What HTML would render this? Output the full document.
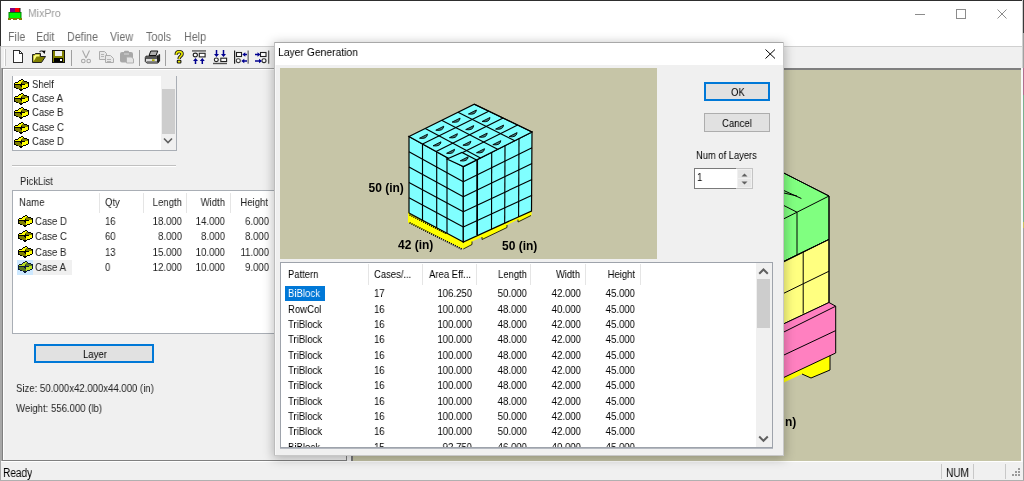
<!DOCTYPE html>
<html><head><meta charset="utf-8"><style>
html,body{margin:0;padding:0;width:1024px;height:481px;overflow:hidden;background:#f0f0f0}
body>div,body>svg,body div{position:absolute}
body>svg{position:absolute}
.t{font-family:"Liberation Sans", sans-serif;line-height:1;white-space:pre;will-change:transform}
svg{position:absolute}
</style></head><body>
<div style="left:0px;top:0px;width:1024px;height:481px;background:#f0f0f0;"></div>
<div style="left:0px;top:0px;width:1024px;height:46px;background:#ffffff;"></div>
<div style="left:0px;top:0px;width:1024px;height:1px;background:#2e2e2e;"></div>
<div style="left:0px;top:0px;width:1px;height:46px;background:#2e2e2e;"></div>
<div style="left:0px;top:46px;width:1px;height:435px;background:#a8a8a8;"></div>
<div style="left:1022px;top:0px;width:1px;height:68px;background:#d0d0d0;"></div>
<div style="left:1023px;top:0px;width:1px;height:33px;background:#3a3a3a;"></div>
<div style="left:1023px;top:33px;width:1px;height:35px;background:#a0a0a0;"></div>
<div style="left:1023px;top:68px;width:1px;height:27px;background:#b07090;"></div>
<div style="left:1023px;top:95px;width:1px;height:127px;background:#78b090;"></div>
<div style="left:1023px;top:222px;width:1px;height:6px;background:#c8c060;"></div>
<div style="left:1023px;top:228px;width:1px;height:253px;background:#a0a0a0;"></div>
<svg style="left:8px;top:7px" width="16" height="15" viewBox="0 0 16 15">
<rect x="2" y="1" width="6" height="5" fill="#800080"/><rect x="7" y="1" width="5" height="5" fill="#ff0000"/>
<rect x="11.5" y="1" width="1" height="5" fill="#202020"/>
<rect x="1" y="5.5" width="12" height="6" fill="#00ff00" stroke="#008000" stroke-width="1"/>
<rect x="0" y="11" width="14" height="2" fill="#808000"/><rect x="3" y="12" width="2" height="1" fill="#fff"/><rect x="9" y="12" width="2" height="1" fill="#fff"/>
</svg>
<div class="t" style="left:27.5px;top:8px;font-size:11.5px;color:#9a9a9a;transform:scaleX(0.91);transform-origin:0 0;">MixPro</div>
<div style="left:915px;top:14px;width:10px;height:1px;background:#8c8c8c;"></div>
<div style="left:956px;top:9px;width:8px;height:8px;border:1px solid #8c8c8c"></div>
<svg style="left:997px;top:9px" width="11" height="10" viewBox="0 0 11 10"><path d="M0.5 0.5L9.5 9.5M9.5 0.5L0.5 9.5" stroke="#8c8c8c" stroke-width="1"/></svg>
<div class="t" style="left:7.5px;top:31px;font-size:12px;color:#6d6d6d;transform:scaleX(0.895);transform-origin:0 0;">File</div>
<div class="t" style="left:36px;top:31px;font-size:12px;color:#6d6d6d;transform:scaleX(0.895);transform-origin:0 0;">Edit</div>
<div class="t" style="left:67px;top:31px;font-size:12px;color:#6d6d6d;transform:scaleX(0.895);transform-origin:0 0;">Define</div>
<div class="t" style="left:110px;top:31px;font-size:12px;color:#6d6d6d;transform:scaleX(0.895);transform-origin:0 0;">View</div>
<div class="t" style="left:146px;top:31px;font-size:12px;color:#6d6d6d;transform:scaleX(0.895);transform-origin:0 0;">Tools</div>
<div class="t" style="left:184px;top:31px;font-size:12px;color:#6d6d6d;transform:scaleX(0.895);transform-origin:0 0;">Help</div>
<div style="left:1px;top:46px;width:1021px;height:1px;background:#d0d0d0;"></div>
<div style="left:1px;top:47px;width:1021px;height:21px;background:#f0f0f0;"></div>
<div style="left:1px;top:68px;width:1021px;height:1px;background:#a0a0a0;"></div>
<div style="left:4px;top:49px;width:1px;height:17px;background:#ffffff;"></div>
<div style="left:5px;top:49px;width:1px;height:17px;background:#c8c8c8;"></div>
<svg style="left:0;top:0" width="274" height="70" viewBox="0 0 274 70">
<g shape-rendering="crispEdges">
<path d="M13.5 50.5H19.5L22.5 53.5V62.5H13.5Z" fill="#fff" stroke="#303030" stroke-width="1"/>
<path d="M19.5 50.5V53.5H22.5" fill="none" stroke="#303030"/>
<rect x="52.5" y="50.5" width="12" height="12" fill="#808000" stroke="#101010"/>
<rect x="55" y="51" width="7" height="5" fill="#f0f0f0"/>
<rect x="54" y="58" width="9" height="4" fill="#000"/>
<rect x="60" y="59" width="2" height="2" fill="#fff"/>
<rect x="71" y="50" width="1" height="16" fill="#a0a0a0"/>
<rect x="139" y="50" width="1" height="16" fill="#a0a0a0"/>
<rect x="165" y="50" width="1" height="16" fill="#a0a0a0"/>
</g>
<!-- open -->
<path d="M32.5 54.5H34.5L35.5 53.5H40.5V56.5H45.5L41.5 62.5H32.5Z" fill="#808000" stroke="#202020"/>
<path d="M33.5 55.5H34.5L35.5 54.5H39.5V56.5H36.5L33.5 61.5Z" fill="#ffff80"/>
<path d="M39.5 52Q41.5 49.8 43.5 51.5" fill="none" stroke="#505050" stroke-width="1.2"/>
<path d="M42 51L45.5 50.5L44.5 54Z" fill="#000"/>
<!-- cut (disabled) -->
<path d="M82.5 50.5L86 58M89.5 50.5L86 58" stroke="#a8a8a8" fill="none" stroke-width="1.1"/>
<circle cx="83.3" cy="61" r="1.8" fill="none" stroke="#a8a8a8" stroke-width="1.1"/>
<circle cx="88.7" cy="61" r="1.8" fill="none" stroke="#a8a8a8" stroke-width="1.1"/>
<!-- copy (disabled) -->
<path d="M99.5 51.5H104.5L106.5 53.5V59.5H99.5Z" fill="#e8e8e8" stroke="#acacac"/>
<path d="M105.5 55.5H110.5L113.5 58.5V62.5H105.5Z" fill="#e8e8e8" stroke="#acacac"/>
<path d="M101 54.5H104M101 56.5H104M107 59.5H111M107 61.5H111" stroke="#b4b4b4"/>
<!-- paste (disabled) -->
<rect x="120" y="52" width="13" height="10.5" rx="2" fill="#a8a8a8"/>
<rect x="124" y="50.8" width="5" height="2" rx="1" fill="#a8a8a8"/>
<rect x="124" y="53.5" width="5" height="1" fill="#d8d8d8"/>
<path d="M126.5 57H131.5L133.5 59V63H126.5Z" fill="#e4e4e4" stroke="#b0b0b0"/>
<!-- print -->
<path d="M149 55.5L150.8 51H157.8L156 55.5Z" fill="#b0b0b0" stroke="#101010"/>
<path d="M146 56.2H157L159.6 54.5V61.2L157.5 63H146.8L145.3 61.5V57.5Z" fill="#dcdcdc" stroke="#101010"/>
<rect x="146" y="57.3" width="11.5" height="1.4" fill="#202020"/>
<rect x="146.5" y="61.2" width="11" height="1.5" fill="#707070"/>
<path d="M158 56V62.5" stroke="#101010" stroke-width="1.8"/>
<rect x="152" y="59.3" width="2.6" height="1.8" fill="#b0b000"/>
<!-- help ? -->
<path d="M176.2 54.8C176.2 52.3 177.4 51.6 179.1 51.6C181 51.6 182.1 52.6 182.1 54.1C182.1 55.6 180.9 56.1 180 56.8C179.3 57.3 179.1 58 179.1 59" fill="none" stroke="#101010" stroke-width="3.4"/>
<path d="M176.2 54.8C176.2 52.3 177.4 51.6 179.1 51.6C181 51.6 182.1 52.6 182.1 54.1C182.1 55.6 180.9 56.1 180 56.8C179.3 57.3 179.1 58 179.1 59" fill="none" stroke="#e8e800" stroke-width="1.6"/>
<rect x="177.3" y="60.2" width="3.6" height="2.8" rx="0.8" fill="#e8e800" stroke="#101010" stroke-width="1.1"/>
<!-- icon 2: top align -->
<rect x="192" y="50" width="14" height="1.8" fill="#7a7a7a"/>
<ellipse cx="195.3" cy="55" rx="2.1" ry="1.9" fill="#fff" stroke="#202020" stroke-width="1.1"/>
<rect x="199.3" y="53.3" width="5.8" height="3.6" fill="#fff" stroke="#202020" stroke-width="1.1"/>
<path d="M195.5 64V60M202.3 64V60" stroke="#000090" stroke-width="1.5"/>
<path d="M193 61L195.5 58L198 61ZM199.8 61L202.3 58L204.8 61Z" fill="#000090"/>
<!-- icon 3: bottom align -->
<path d="M216.5 50V54.5M223.5 50V54.5" stroke="#000090" stroke-width="1.5"/>
<path d="M214 54L216.5 57L219 54ZM221 54L223.5 57L226 54Z" fill="#000090"/>
<ellipse cx="216.3" cy="59.8" rx="2" ry="1.8" fill="#fff" stroke="#202020" stroke-width="1.1"/>
<rect x="220.8" y="58.2" width="5.8" height="3.3" fill="#fff" stroke="#202020" stroke-width="1.1"/>
<rect x="213" y="62.8" width="14" height="1.4" fill="#505050"/>
<!-- icon 4 -->
<rect x="234" y="50.5" width="1.2" height="13.2" fill="#202020"/>
<rect x="247.5" y="50.5" width="1.3" height="13.2" fill="#6a6a6a"/>
<rect x="236.5" y="52.5" width="5" height="4" fill="#fff" stroke="#202020" stroke-width="1.1"/>
<ellipse cx="238.3" cy="60.7" rx="2" ry="1.9" fill="#fff" stroke="#404040" stroke-width="1.1"/>
<path d="M244 54.5H247M243.5 61H247" stroke="#000090" stroke-width="1.4"/>
<path d="M245.3 52.3L242.3 54.5L245.3 56.7ZM244.3 58.8L241.3 61L244.3 63.2Z" fill="#000090"/>
<!-- icon 5 -->
<rect x="268" y="50.5" width="1.3" height="13.2" fill="#5a5a5a"/>
<rect x="260.5" y="52.5" width="5.5" height="4" fill="#fff" stroke="#202020" stroke-width="1.1"/>
<ellipse cx="264" cy="60.7" rx="2" ry="1.9" fill="#fff" stroke="#303030" stroke-width="1.1"/>
<path d="M255 54.5H258M255 61H259.5" stroke="#000090" stroke-width="1.4"/>
<path d="M257.5 52.3L260.5 54.5L257.5 56.7ZM259 58.8L262 61L259 63.2Z" fill="#000090"/>
</svg>
<div style="left:1px;top:69px;width:346px;height:392px;background:#f0f0f0;"></div>
<div style="left:1px;top:68px;width:1px;height:413px;background:#a8a8a8;"></div>
<div style="left:2px;top:68px;width:1px;height:393px;background:#808080;"></div>
<div style="left:3px;top:69px;width:344px;height:1px;background:#ffffff;"></div>
<div style="left:3px;top:69px;width:1px;height:391px;background:#ffffff;"></div>
<div style="left:2px;top:460px;width:345px;height:1px;background:#808080;"></div>
<div style="left:346px;top:69px;width:1px;height:392px;background:#808080;"></div>
<div style="left:347px;top:69px;width:5px;height:392px;background:#f0f0f0;"></div>
<div style="left:351px;top:68px;width:2px;height:393px;background:#7a7a7a;"></div>
<div style="left:353px;top:70px;width:668px;height:391px;background:#c6c5a7;"></div>
<div style="left:351px;top:68px;width:671px;height:2px;background:#7f7f7f;"></div>
<div style="left:1021px;top:68px;width:2px;height:394px;background:#f8f8f8;"></div>
<div style="left:1px;top:461px;width:1021px;height:1px;background:#ffffff;"></div>
<div style="left:1px;top:462px;width:1021px;height:18px;background:#f0f0f0;"></div>
<div style="left:0px;top:480px;width:1024px;height:1px;background:#b0b0b0;"></div>
<div class="t" style="left:3px;top:467px;font-size:12px;color:#000;transform:scaleX(0.84);transform-origin:0 0;">Ready</div>
<div style="left:941px;top:464px;width:1px;height:15px;background:#c8c8c8;"></div>
<div style="left:973px;top:464px;width:1px;height:15px;background:#c8c8c8;"></div>
<div style="left:1005px;top:464px;width:1px;height:15px;background:#c8c8c8;"></div>
<div class="t" style="left:946px;top:467px;font-size:12px;color:#000;transform:scaleX(0.84);transform-origin:0 0;">NUM</div>
<svg style="left:1010px;top:468px" width="11" height="11" viewBox="0 0 11 11"><g fill="#9a9a9a"><rect x="8" y="0" width="2" height="2"/><rect x="5" y="3" width="2" height="2"/><rect x="8" y="3" width="2" height="2"/><rect x="2" y="6" width="2" height="2"/><rect x="5" y="6" width="2" height="2"/><rect x="8" y="6" width="2" height="2"/></g></svg>
<div style="left:12px;top:76px;width:165px;height:75px;background:#a9aeb5;"></div>
<div style="left:13px;top:76px;width:163px;height:74px;background:#ffffff;"></div>
<div style="left:161px;top:76px;width:15px;height:74px;background:#f0f0f0;"></div>
<div style="left:162px;top:89px;width:13px;height:45px;background:#cdcdcd;"></div>
<svg style="left:162px;top:136px" width="12" height="10" viewBox="0 0 12 10"><path d="M2 2.5L6 6.5L10 2.5" fill="none" stroke="#606060" stroke-width="1.6"/></svg>
<svg style="left:13px;top:79px" width="17" height="12" viewBox="0 0 17 12" shape-rendering="crispEdges"><rect x="8" y="0" width="2" height="1" fill="#000"/><rect x="6" y="1" width="2" height="1" fill="#000"/><rect x="8" y="1" width="2" height="1" fill="#ffff00"/><rect x="10" y="1" width="1" height="1" fill="#000"/><rect x="5" y="2" width="1" height="1" fill="#000"/><rect x="6" y="2" width="3" height="1" fill="#ffff00"/><rect x="9" y="2" width="2" height="1" fill="#808000"/><rect x="11" y="2" width="3" height="1" fill="#000"/><rect x="2" y="3" width="3" height="1" fill="#000"/><rect x="5" y="3" width="3" height="1" fill="#ffff00"/><rect x="8" y="3" width="6" height="1" fill="#808000"/><rect x="14" y="3" width="2" height="1" fill="#000"/><rect x="1" y="4" width="1" height="1" fill="#000"/><rect x="2" y="4" width="6" height="1" fill="#ffff00"/><rect x="8" y="4" width="1" height="1" fill="#000"/><rect x="9" y="4" width="6" height="1" fill="#808000"/><rect x="15" y="4" width="1" height="1" fill="#000"/><rect x="1" y="5" width="11" height="1" fill="#000"/><rect x="12" y="5" width="3" height="1" fill="#ffff00"/><rect x="15" y="5" width="1" height="1" fill="#000"/><rect x="1" y="6" width="1" height="1" fill="#000"/><rect x="2" y="6" width="5" height="1" fill="#808000"/><rect x="7" y="6" width="2" height="1" fill="#000"/><rect x="9" y="6" width="6" height="1" fill="#ffff00"/><rect x="15" y="6" width="1" height="1" fill="#000"/><rect x="1" y="7" width="1" height="1" fill="#000"/><rect x="2" y="7" width="6" height="1" fill="#808000"/><rect x="8" y="7" width="1" height="1" fill="#000"/><rect x="9" y="7" width="6" height="1" fill="#ffff00"/><rect x="15" y="7" width="1" height="1" fill="#000"/><rect x="1" y="8" width="2" height="1" fill="#000"/><rect x="3" y="8" width="6" height="1" fill="#808000"/><rect x="9" y="8" width="4" height="1" fill="#ffff00"/><rect x="13" y="8" width="2" height="1" fill="#000"/><rect x="3" y="9" width="2" height="1" fill="#000"/><rect x="5" y="9" width="4" height="1" fill="#808000"/><rect x="9" y="9" width="1" height="1" fill="#ffff00"/><rect x="10" y="9" width="3" height="1" fill="#000"/><rect x="6" y="10" width="4" height="1" fill="#000"/><rect x="7" y="11" width="2" height="1" fill="#000"/></svg>
<div class="t" style="left:32px;top:79px;font-size:11px;color:#222;transform:scaleX(0.87);transform-origin:0 0;">Shelf</div>
<svg style="left:13px;top:93px" width="17" height="12" viewBox="0 0 17 12" shape-rendering="crispEdges"><rect x="8" y="0" width="2" height="1" fill="#000"/><rect x="6" y="1" width="2" height="1" fill="#000"/><rect x="8" y="1" width="2" height="1" fill="#ffff00"/><rect x="10" y="1" width="1" height="1" fill="#000"/><rect x="5" y="2" width="1" height="1" fill="#000"/><rect x="6" y="2" width="3" height="1" fill="#ffff00"/><rect x="9" y="2" width="2" height="1" fill="#808000"/><rect x="11" y="2" width="3" height="1" fill="#000"/><rect x="2" y="3" width="3" height="1" fill="#000"/><rect x="5" y="3" width="3" height="1" fill="#ffff00"/><rect x="8" y="3" width="6" height="1" fill="#808000"/><rect x="14" y="3" width="2" height="1" fill="#000"/><rect x="1" y="4" width="1" height="1" fill="#000"/><rect x="2" y="4" width="6" height="1" fill="#ffff00"/><rect x="8" y="4" width="1" height="1" fill="#000"/><rect x="9" y="4" width="6" height="1" fill="#808000"/><rect x="15" y="4" width="1" height="1" fill="#000"/><rect x="1" y="5" width="11" height="1" fill="#000"/><rect x="12" y="5" width="3" height="1" fill="#ffff00"/><rect x="15" y="5" width="1" height="1" fill="#000"/><rect x="1" y="6" width="1" height="1" fill="#000"/><rect x="2" y="6" width="5" height="1" fill="#808000"/><rect x="7" y="6" width="2" height="1" fill="#000"/><rect x="9" y="6" width="6" height="1" fill="#ffff00"/><rect x="15" y="6" width="1" height="1" fill="#000"/><rect x="1" y="7" width="1" height="1" fill="#000"/><rect x="2" y="7" width="6" height="1" fill="#808000"/><rect x="8" y="7" width="1" height="1" fill="#000"/><rect x="9" y="7" width="6" height="1" fill="#ffff00"/><rect x="15" y="7" width="1" height="1" fill="#000"/><rect x="1" y="8" width="2" height="1" fill="#000"/><rect x="3" y="8" width="6" height="1" fill="#808000"/><rect x="9" y="8" width="4" height="1" fill="#ffff00"/><rect x="13" y="8" width="2" height="1" fill="#000"/><rect x="3" y="9" width="2" height="1" fill="#000"/><rect x="5" y="9" width="4" height="1" fill="#808000"/><rect x="9" y="9" width="1" height="1" fill="#ffff00"/><rect x="10" y="9" width="3" height="1" fill="#000"/><rect x="6" y="10" width="4" height="1" fill="#000"/><rect x="7" y="11" width="2" height="1" fill="#000"/></svg>
<div class="t" style="left:32px;top:93px;font-size:11px;color:#222;transform:scaleX(0.87);transform-origin:0 0;">Case A</div>
<svg style="left:13px;top:107px" width="17" height="12" viewBox="0 0 17 12" shape-rendering="crispEdges"><rect x="8" y="0" width="2" height="1" fill="#000"/><rect x="6" y="1" width="2" height="1" fill="#000"/><rect x="8" y="1" width="2" height="1" fill="#ffff00"/><rect x="10" y="1" width="1" height="1" fill="#000"/><rect x="5" y="2" width="1" height="1" fill="#000"/><rect x="6" y="2" width="3" height="1" fill="#ffff00"/><rect x="9" y="2" width="2" height="1" fill="#808000"/><rect x="11" y="2" width="3" height="1" fill="#000"/><rect x="2" y="3" width="3" height="1" fill="#000"/><rect x="5" y="3" width="3" height="1" fill="#ffff00"/><rect x="8" y="3" width="6" height="1" fill="#808000"/><rect x="14" y="3" width="2" height="1" fill="#000"/><rect x="1" y="4" width="1" height="1" fill="#000"/><rect x="2" y="4" width="6" height="1" fill="#ffff00"/><rect x="8" y="4" width="1" height="1" fill="#000"/><rect x="9" y="4" width="6" height="1" fill="#808000"/><rect x="15" y="4" width="1" height="1" fill="#000"/><rect x="1" y="5" width="11" height="1" fill="#000"/><rect x="12" y="5" width="3" height="1" fill="#ffff00"/><rect x="15" y="5" width="1" height="1" fill="#000"/><rect x="1" y="6" width="1" height="1" fill="#000"/><rect x="2" y="6" width="5" height="1" fill="#808000"/><rect x="7" y="6" width="2" height="1" fill="#000"/><rect x="9" y="6" width="6" height="1" fill="#ffff00"/><rect x="15" y="6" width="1" height="1" fill="#000"/><rect x="1" y="7" width="1" height="1" fill="#000"/><rect x="2" y="7" width="6" height="1" fill="#808000"/><rect x="8" y="7" width="1" height="1" fill="#000"/><rect x="9" y="7" width="6" height="1" fill="#ffff00"/><rect x="15" y="7" width="1" height="1" fill="#000"/><rect x="1" y="8" width="2" height="1" fill="#000"/><rect x="3" y="8" width="6" height="1" fill="#808000"/><rect x="9" y="8" width="4" height="1" fill="#ffff00"/><rect x="13" y="8" width="2" height="1" fill="#000"/><rect x="3" y="9" width="2" height="1" fill="#000"/><rect x="5" y="9" width="4" height="1" fill="#808000"/><rect x="9" y="9" width="1" height="1" fill="#ffff00"/><rect x="10" y="9" width="3" height="1" fill="#000"/><rect x="6" y="10" width="4" height="1" fill="#000"/><rect x="7" y="11" width="2" height="1" fill="#000"/></svg>
<div class="t" style="left:32px;top:107px;font-size:11px;color:#222;transform:scaleX(0.87);transform-origin:0 0;">Case B</div>
<svg style="left:13px;top:122px" width="17" height="12" viewBox="0 0 17 12" shape-rendering="crispEdges"><rect x="8" y="0" width="2" height="1" fill="#000"/><rect x="6" y="1" width="2" height="1" fill="#000"/><rect x="8" y="1" width="2" height="1" fill="#ffff00"/><rect x="10" y="1" width="1" height="1" fill="#000"/><rect x="5" y="2" width="1" height="1" fill="#000"/><rect x="6" y="2" width="3" height="1" fill="#ffff00"/><rect x="9" y="2" width="2" height="1" fill="#808000"/><rect x="11" y="2" width="3" height="1" fill="#000"/><rect x="2" y="3" width="3" height="1" fill="#000"/><rect x="5" y="3" width="3" height="1" fill="#ffff00"/><rect x="8" y="3" width="6" height="1" fill="#808000"/><rect x="14" y="3" width="2" height="1" fill="#000"/><rect x="1" y="4" width="1" height="1" fill="#000"/><rect x="2" y="4" width="6" height="1" fill="#ffff00"/><rect x="8" y="4" width="1" height="1" fill="#000"/><rect x="9" y="4" width="6" height="1" fill="#808000"/><rect x="15" y="4" width="1" height="1" fill="#000"/><rect x="1" y="5" width="11" height="1" fill="#000"/><rect x="12" y="5" width="3" height="1" fill="#ffff00"/><rect x="15" y="5" width="1" height="1" fill="#000"/><rect x="1" y="6" width="1" height="1" fill="#000"/><rect x="2" y="6" width="5" height="1" fill="#808000"/><rect x="7" y="6" width="2" height="1" fill="#000"/><rect x="9" y="6" width="6" height="1" fill="#ffff00"/><rect x="15" y="6" width="1" height="1" fill="#000"/><rect x="1" y="7" width="1" height="1" fill="#000"/><rect x="2" y="7" width="6" height="1" fill="#808000"/><rect x="8" y="7" width="1" height="1" fill="#000"/><rect x="9" y="7" width="6" height="1" fill="#ffff00"/><rect x="15" y="7" width="1" height="1" fill="#000"/><rect x="1" y="8" width="2" height="1" fill="#000"/><rect x="3" y="8" width="6" height="1" fill="#808000"/><rect x="9" y="8" width="4" height="1" fill="#ffff00"/><rect x="13" y="8" width="2" height="1" fill="#000"/><rect x="3" y="9" width="2" height="1" fill="#000"/><rect x="5" y="9" width="4" height="1" fill="#808000"/><rect x="9" y="9" width="1" height="1" fill="#ffff00"/><rect x="10" y="9" width="3" height="1" fill="#000"/><rect x="6" y="10" width="4" height="1" fill="#000"/><rect x="7" y="11" width="2" height="1" fill="#000"/></svg>
<div class="t" style="left:32px;top:122px;font-size:11px;color:#222;transform:scaleX(0.87);transform-origin:0 0;">Case C</div>
<svg style="left:13px;top:136px" width="17" height="12" viewBox="0 0 17 12" shape-rendering="crispEdges"><rect x="8" y="0" width="2" height="1" fill="#000"/><rect x="6" y="1" width="2" height="1" fill="#000"/><rect x="8" y="1" width="2" height="1" fill="#ffff00"/><rect x="10" y="1" width="1" height="1" fill="#000"/><rect x="5" y="2" width="1" height="1" fill="#000"/><rect x="6" y="2" width="3" height="1" fill="#ffff00"/><rect x="9" y="2" width="2" height="1" fill="#808000"/><rect x="11" y="2" width="3" height="1" fill="#000"/><rect x="2" y="3" width="3" height="1" fill="#000"/><rect x="5" y="3" width="3" height="1" fill="#ffff00"/><rect x="8" y="3" width="6" height="1" fill="#808000"/><rect x="14" y="3" width="2" height="1" fill="#000"/><rect x="1" y="4" width="1" height="1" fill="#000"/><rect x="2" y="4" width="6" height="1" fill="#ffff00"/><rect x="8" y="4" width="1" height="1" fill="#000"/><rect x="9" y="4" width="6" height="1" fill="#808000"/><rect x="15" y="4" width="1" height="1" fill="#000"/><rect x="1" y="5" width="11" height="1" fill="#000"/><rect x="12" y="5" width="3" height="1" fill="#ffff00"/><rect x="15" y="5" width="1" height="1" fill="#000"/><rect x="1" y="6" width="1" height="1" fill="#000"/><rect x="2" y="6" width="5" height="1" fill="#808000"/><rect x="7" y="6" width="2" height="1" fill="#000"/><rect x="9" y="6" width="6" height="1" fill="#ffff00"/><rect x="15" y="6" width="1" height="1" fill="#000"/><rect x="1" y="7" width="1" height="1" fill="#000"/><rect x="2" y="7" width="6" height="1" fill="#808000"/><rect x="8" y="7" width="1" height="1" fill="#000"/><rect x="9" y="7" width="6" height="1" fill="#ffff00"/><rect x="15" y="7" width="1" height="1" fill="#000"/><rect x="1" y="8" width="2" height="1" fill="#000"/><rect x="3" y="8" width="6" height="1" fill="#808000"/><rect x="9" y="8" width="4" height="1" fill="#ffff00"/><rect x="13" y="8" width="2" height="1" fill="#000"/><rect x="3" y="9" width="2" height="1" fill="#000"/><rect x="5" y="9" width="4" height="1" fill="#808000"/><rect x="9" y="9" width="1" height="1" fill="#ffff00"/><rect x="10" y="9" width="3" height="1" fill="#000"/><rect x="6" y="10" width="4" height="1" fill="#000"/><rect x="7" y="11" width="2" height="1" fill="#000"/></svg>
<div class="t" style="left:32px;top:136px;font-size:11px;color:#222;transform:scaleX(0.87);transform-origin:0 0;">Case D</div>
<div style="left:12px;top:165px;width:164px;height:1px;background:#c0c0c0;"></div>
<div style="left:12px;top:166px;width:164px;height:1px;background:#ffffff;"></div>
<div class="t" style="left:20px;top:176px;font-size:11px;color:#222;transform:scaleX(0.87);transform-origin:0 0;">PickList</div>
<div style="left:12px;top:190px;width:335px;height:144px;background:#a9aeb5;"></div>
<div style="left:13px;top:191px;width:333px;height:142px;background:#ffffff;"></div>
<div style="left:99px;top:193px;width:1px;height:20px;background:#e5e5e5;"></div>
<div style="left:143px;top:193px;width:1px;height:20px;background:#e5e5e5;"></div>
<div style="left:186px;top:193px;width:1px;height:20px;background:#e5e5e5;"></div>
<div style="left:230px;top:193px;width:1px;height:20px;background:#e5e5e5;"></div>
<div class="t" style="left:19px;top:197px;font-size:11px;color:#222;transform:scaleX(0.87);transform-origin:0 0;">Name</div>
<div class="t" style="left:105px;top:197px;font-size:11px;color:#222;transform:scaleX(0.87);transform-origin:0 0;">Qty</div>
<div class="t" style="left:-118px;width:300px;text-align:right;top:197px;font-size:11px;color:#222;transform:scaleX(0.87);transform-origin:100% 0;">Length</div>
<div class="t" style="left:-75px;width:300px;text-align:right;top:197px;font-size:11px;color:#222;transform:scaleX(0.87);transform-origin:100% 0;">Width</div>
<div class="t" style="left:-32px;width:300px;text-align:right;top:197px;font-size:11px;color:#222;transform:scaleX(0.87);transform-origin:100% 0;">Height</div>
<svg style="left:17px;top:215px" width="17" height="12" viewBox="0 0 17 12" shape-rendering="crispEdges"><rect x="8" y="0" width="2" height="1" fill="#000"/><rect x="6" y="1" width="2" height="1" fill="#000"/><rect x="8" y="1" width="2" height="1" fill="#ffff00"/><rect x="10" y="1" width="1" height="1" fill="#000"/><rect x="5" y="2" width="1" height="1" fill="#000"/><rect x="6" y="2" width="3" height="1" fill="#ffff00"/><rect x="9" y="2" width="2" height="1" fill="#808000"/><rect x="11" y="2" width="3" height="1" fill="#000"/><rect x="2" y="3" width="3" height="1" fill="#000"/><rect x="5" y="3" width="3" height="1" fill="#ffff00"/><rect x="8" y="3" width="6" height="1" fill="#808000"/><rect x="14" y="3" width="2" height="1" fill="#000"/><rect x="1" y="4" width="1" height="1" fill="#000"/><rect x="2" y="4" width="6" height="1" fill="#ffff00"/><rect x="8" y="4" width="1" height="1" fill="#000"/><rect x="9" y="4" width="6" height="1" fill="#808000"/><rect x="15" y="4" width="1" height="1" fill="#000"/><rect x="1" y="5" width="11" height="1" fill="#000"/><rect x="12" y="5" width="3" height="1" fill="#ffff00"/><rect x="15" y="5" width="1" height="1" fill="#000"/><rect x="1" y="6" width="1" height="1" fill="#000"/><rect x="2" y="6" width="5" height="1" fill="#808000"/><rect x="7" y="6" width="2" height="1" fill="#000"/><rect x="9" y="6" width="6" height="1" fill="#ffff00"/><rect x="15" y="6" width="1" height="1" fill="#000"/><rect x="1" y="7" width="1" height="1" fill="#000"/><rect x="2" y="7" width="6" height="1" fill="#808000"/><rect x="8" y="7" width="1" height="1" fill="#000"/><rect x="9" y="7" width="6" height="1" fill="#ffff00"/><rect x="15" y="7" width="1" height="1" fill="#000"/><rect x="1" y="8" width="2" height="1" fill="#000"/><rect x="3" y="8" width="6" height="1" fill="#808000"/><rect x="9" y="8" width="4" height="1" fill="#ffff00"/><rect x="13" y="8" width="2" height="1" fill="#000"/><rect x="3" y="9" width="2" height="1" fill="#000"/><rect x="5" y="9" width="4" height="1" fill="#808000"/><rect x="9" y="9" width="1" height="1" fill="#ffff00"/><rect x="10" y="9" width="3" height="1" fill="#000"/><rect x="6" y="10" width="4" height="1" fill="#000"/><rect x="7" y="11" width="2" height="1" fill="#000"/></svg>
<div class="t" style="left:35px;top:216px;font-size:11px;color:#222;transform:scaleX(0.87);transform-origin:0 0;">Case D</div>
<div class="t" style="left:105px;top:216px;font-size:11px;color:#222;transform:scaleX(0.87);transform-origin:0 0;">16</div>
<div class="t" style="left:-118px;width:300px;text-align:right;top:216px;font-size:11px;color:#222;transform:scaleX(0.87);transform-origin:100% 0;">18.000</div>
<div class="t" style="left:-75px;width:300px;text-align:right;top:216px;font-size:11px;color:#222;transform:scaleX(0.87);transform-origin:100% 0;">14.000</div>
<div class="t" style="left:-31px;width:300px;text-align:right;top:216px;font-size:11px;color:#222;transform:scaleX(0.87);transform-origin:100% 0;">6.000</div>
<svg style="left:17px;top:230px" width="17" height="12" viewBox="0 0 17 12" shape-rendering="crispEdges"><rect x="8" y="0" width="2" height="1" fill="#000"/><rect x="6" y="1" width="2" height="1" fill="#000"/><rect x="8" y="1" width="2" height="1" fill="#ffff00"/><rect x="10" y="1" width="1" height="1" fill="#000"/><rect x="5" y="2" width="1" height="1" fill="#000"/><rect x="6" y="2" width="3" height="1" fill="#ffff00"/><rect x="9" y="2" width="2" height="1" fill="#808000"/><rect x="11" y="2" width="3" height="1" fill="#000"/><rect x="2" y="3" width="3" height="1" fill="#000"/><rect x="5" y="3" width="3" height="1" fill="#ffff00"/><rect x="8" y="3" width="6" height="1" fill="#808000"/><rect x="14" y="3" width="2" height="1" fill="#000"/><rect x="1" y="4" width="1" height="1" fill="#000"/><rect x="2" y="4" width="6" height="1" fill="#ffff00"/><rect x="8" y="4" width="1" height="1" fill="#000"/><rect x="9" y="4" width="6" height="1" fill="#808000"/><rect x="15" y="4" width="1" height="1" fill="#000"/><rect x="1" y="5" width="11" height="1" fill="#000"/><rect x="12" y="5" width="3" height="1" fill="#ffff00"/><rect x="15" y="5" width="1" height="1" fill="#000"/><rect x="1" y="6" width="1" height="1" fill="#000"/><rect x="2" y="6" width="5" height="1" fill="#808000"/><rect x="7" y="6" width="2" height="1" fill="#000"/><rect x="9" y="6" width="6" height="1" fill="#ffff00"/><rect x="15" y="6" width="1" height="1" fill="#000"/><rect x="1" y="7" width="1" height="1" fill="#000"/><rect x="2" y="7" width="6" height="1" fill="#808000"/><rect x="8" y="7" width="1" height="1" fill="#000"/><rect x="9" y="7" width="6" height="1" fill="#ffff00"/><rect x="15" y="7" width="1" height="1" fill="#000"/><rect x="1" y="8" width="2" height="1" fill="#000"/><rect x="3" y="8" width="6" height="1" fill="#808000"/><rect x="9" y="8" width="4" height="1" fill="#ffff00"/><rect x="13" y="8" width="2" height="1" fill="#000"/><rect x="3" y="9" width="2" height="1" fill="#000"/><rect x="5" y="9" width="4" height="1" fill="#808000"/><rect x="9" y="9" width="1" height="1" fill="#ffff00"/><rect x="10" y="9" width="3" height="1" fill="#000"/><rect x="6" y="10" width="4" height="1" fill="#000"/><rect x="7" y="11" width="2" height="1" fill="#000"/></svg>
<div class="t" style="left:35px;top:231px;font-size:11px;color:#222;transform:scaleX(0.87);transform-origin:0 0;">Case C</div>
<div class="t" style="left:105px;top:231px;font-size:11px;color:#222;transform:scaleX(0.87);transform-origin:0 0;">60</div>
<div class="t" style="left:-118px;width:300px;text-align:right;top:231px;font-size:11px;color:#222;transform:scaleX(0.87);transform-origin:100% 0;">8.000</div>
<div class="t" style="left:-75px;width:300px;text-align:right;top:231px;font-size:11px;color:#222;transform:scaleX(0.87);transform-origin:100% 0;">8.000</div>
<div class="t" style="left:-31px;width:300px;text-align:right;top:231px;font-size:11px;color:#222;transform:scaleX(0.87);transform-origin:100% 0;">8.000</div>
<svg style="left:17px;top:246px" width="17" height="12" viewBox="0 0 17 12" shape-rendering="crispEdges"><rect x="8" y="0" width="2" height="1" fill="#000"/><rect x="6" y="1" width="2" height="1" fill="#000"/><rect x="8" y="1" width="2" height="1" fill="#ffff00"/><rect x="10" y="1" width="1" height="1" fill="#000"/><rect x="5" y="2" width="1" height="1" fill="#000"/><rect x="6" y="2" width="3" height="1" fill="#ffff00"/><rect x="9" y="2" width="2" height="1" fill="#808000"/><rect x="11" y="2" width="3" height="1" fill="#000"/><rect x="2" y="3" width="3" height="1" fill="#000"/><rect x="5" y="3" width="3" height="1" fill="#ffff00"/><rect x="8" y="3" width="6" height="1" fill="#808000"/><rect x="14" y="3" width="2" height="1" fill="#000"/><rect x="1" y="4" width="1" height="1" fill="#000"/><rect x="2" y="4" width="6" height="1" fill="#ffff00"/><rect x="8" y="4" width="1" height="1" fill="#000"/><rect x="9" y="4" width="6" height="1" fill="#808000"/><rect x="15" y="4" width="1" height="1" fill="#000"/><rect x="1" y="5" width="11" height="1" fill="#000"/><rect x="12" y="5" width="3" height="1" fill="#ffff00"/><rect x="15" y="5" width="1" height="1" fill="#000"/><rect x="1" y="6" width="1" height="1" fill="#000"/><rect x="2" y="6" width="5" height="1" fill="#808000"/><rect x="7" y="6" width="2" height="1" fill="#000"/><rect x="9" y="6" width="6" height="1" fill="#ffff00"/><rect x="15" y="6" width="1" height="1" fill="#000"/><rect x="1" y="7" width="1" height="1" fill="#000"/><rect x="2" y="7" width="6" height="1" fill="#808000"/><rect x="8" y="7" width="1" height="1" fill="#000"/><rect x="9" y="7" width="6" height="1" fill="#ffff00"/><rect x="15" y="7" width="1" height="1" fill="#000"/><rect x="1" y="8" width="2" height="1" fill="#000"/><rect x="3" y="8" width="6" height="1" fill="#808000"/><rect x="9" y="8" width="4" height="1" fill="#ffff00"/><rect x="13" y="8" width="2" height="1" fill="#000"/><rect x="3" y="9" width="2" height="1" fill="#000"/><rect x="5" y="9" width="4" height="1" fill="#808000"/><rect x="9" y="9" width="1" height="1" fill="#ffff00"/><rect x="10" y="9" width="3" height="1" fill="#000"/><rect x="6" y="10" width="4" height="1" fill="#000"/><rect x="7" y="11" width="2" height="1" fill="#000"/></svg>
<div class="t" style="left:35px;top:247px;font-size:11px;color:#222;transform:scaleX(0.87);transform-origin:0 0;">Case B</div>
<div class="t" style="left:105px;top:247px;font-size:11px;color:#222;transform:scaleX(0.87);transform-origin:0 0;">13</div>
<div class="t" style="left:-118px;width:300px;text-align:right;top:247px;font-size:11px;color:#222;transform:scaleX(0.87);transform-origin:100% 0;">15.000</div>
<div class="t" style="left:-75px;width:300px;text-align:right;top:247px;font-size:11px;color:#222;transform:scaleX(0.87);transform-origin:100% 0;">10.000</div>
<div class="t" style="left:-31px;width:300px;text-align:right;top:247px;font-size:11px;color:#222;transform:scaleX(0.87);transform-origin:100% 0;">11.000</div>
<div style="left:17px;top:260px;width:16px;height:15px;background:#cce8ff;"></div>
<div style="left:33px;top:260px;width:39px;height:15px;background:#f0f0f0;"></div>
<svg style="left:17px;top:261px" width="17" height="12" viewBox="0 0 17 12" shape-rendering="crispEdges"><rect x="8" y="0" width="2" height="1" fill="#0a1a38"/><rect x="6" y="1" width="2" height="1" fill="#0a1a38"/><rect x="8" y="1" width="2" height="1" fill="#b8e020"/><rect x="10" y="1" width="1" height="1" fill="#0a1a38"/><rect x="5" y="2" width="1" height="1" fill="#0a1a38"/><rect x="6" y="2" width="3" height="1" fill="#b8e020"/><rect x="9" y="2" width="2" height="1" fill="#5a7820"/><rect x="11" y="2" width="3" height="1" fill="#0a1a38"/><rect x="2" y="3" width="3" height="1" fill="#0a1a38"/><rect x="5" y="3" width="3" height="1" fill="#b8e020"/><rect x="8" y="3" width="6" height="1" fill="#5a7820"/><rect x="14" y="3" width="2" height="1" fill="#0a1a38"/><rect x="1" y="4" width="1" height="1" fill="#0a1a38"/><rect x="2" y="4" width="6" height="1" fill="#b8e020"/><rect x="8" y="4" width="1" height="1" fill="#0a1a38"/><rect x="9" y="4" width="6" height="1" fill="#5a7820"/><rect x="15" y="4" width="1" height="1" fill="#0a1a38"/><rect x="1" y="5" width="11" height="1" fill="#0a1a38"/><rect x="12" y="5" width="3" height="1" fill="#b8e020"/><rect x="15" y="5" width="1" height="1" fill="#0a1a38"/><rect x="1" y="6" width="1" height="1" fill="#0a1a38"/><rect x="2" y="6" width="5" height="1" fill="#5a7820"/><rect x="7" y="6" width="2" height="1" fill="#0a1a38"/><rect x="9" y="6" width="6" height="1" fill="#b8e020"/><rect x="15" y="6" width="1" height="1" fill="#0a1a38"/><rect x="1" y="7" width="1" height="1" fill="#0a1a38"/><rect x="2" y="7" width="6" height="1" fill="#5a7820"/><rect x="8" y="7" width="1" height="1" fill="#0a1a38"/><rect x="9" y="7" width="6" height="1" fill="#b8e020"/><rect x="15" y="7" width="1" height="1" fill="#0a1a38"/><rect x="1" y="8" width="2" height="1" fill="#0a1a38"/><rect x="3" y="8" width="6" height="1" fill="#5a7820"/><rect x="9" y="8" width="4" height="1" fill="#b8e020"/><rect x="13" y="8" width="2" height="1" fill="#0a1a38"/><rect x="3" y="9" width="2" height="1" fill="#0a1a38"/><rect x="5" y="9" width="4" height="1" fill="#5a7820"/><rect x="9" y="9" width="1" height="1" fill="#b8e020"/><rect x="10" y="9" width="3" height="1" fill="#0a1a38"/><rect x="6" y="10" width="4" height="1" fill="#0a1a38"/><rect x="7" y="11" width="2" height="1" fill="#0a1a38"/></svg>
<div class="t" style="left:35px;top:262px;font-size:11px;color:#222;transform:scaleX(0.87);transform-origin:0 0;">Case A</div>
<div class="t" style="left:105px;top:262px;font-size:11px;color:#222;transform:scaleX(0.87);transform-origin:0 0;">0</div>
<div class="t" style="left:-118px;width:300px;text-align:right;top:262px;font-size:11px;color:#222;transform:scaleX(0.87);transform-origin:100% 0;">12.000</div>
<div class="t" style="left:-75px;width:300px;text-align:right;top:262px;font-size:11px;color:#222;transform:scaleX(0.87);transform-origin:100% 0;">10.000</div>
<div class="t" style="left:-31px;width:300px;text-align:right;top:262px;font-size:11px;color:#222;transform:scaleX(0.87);transform-origin:100% 0;">9.000</div>
<div style="left:34px;top:344px;width:120px;height:19px;background:#0078d7;"></div>
<div style="left:36px;top:346px;width:116px;height:15px;background:#e1e1e1;"></div>
<div class="t" style="left:83px;top:349px;font-size:11px;color:#000;transform:scaleX(0.87);transform-origin:0 0;">Layer</div>
<div class="t" style="left:16.3px;top:383px;font-size:11px;color:#222;transform:scaleX(0.87);transform-origin:0 0;">Size: 50.000x42.000x44.000 (in)</div>
<div class="t" style="left:16.3px;top:403px;font-size:11px;color:#222;transform:scaleX(0.87);transform-origin:0 0;">Weight: 556.000 (lb)</div>
<svg style="left:0;top:0" width="1024" height="481" viewBox="0 0 1024 481">
<g stroke="#000" stroke-width="1" stroke-linejoin="round">
<polygon points="770,166 829,196 829,239.4 770,268" fill="#80ff80"/>
<polygon points="770,268.8 829,239.4 829,302.5 770,330.3" fill="#ffff80"/>
<polygon points="770,330.3 829,302.5 835.7,306.2 835.7,353 770,384" fill="#ff80c0" stroke="none"/>
<polygon points="770,384 835.7,353 830,355.6 830,370 811,378 802,374 770,389" fill="#ffff00" stroke="none"/>
<path d="M770 166L829 196L829 302.5M829 196L797 212.2V255M784 205.6L797 212.2L784 218.7M784 190.6L801.4 198.5M784 193L797 196" fill="none"/>
<path d="M829 239.4L770 268M803.2 251.8V313.7M829 271.2L770 300" fill="none"/>
<path d="M770 330.3L829 302.5L835.7 306.2L770 338.9M835.7 306.2V353M835.7 330.6L770 361.6M835.7 353L770 384" fill="none"/>
<path d="M830 355.6V370L811 378L802 374" fill="none"/>
</g>
<text x="785" y="426.4" font-family="Liberation Sans" font-weight="bold" font-size="12">n)</text>
</svg>
<div style="left:274px;top:42px;width:510px;height:414px;background:#f0f0f0;box-shadow:0 2px 10px 1px rgba(0,0,0,0.26);"></div>
<div style="left:274px;top:42px;width:510px;height:1px;background:#a8a8a8;"></div>
<div style="left:274px;top:42px;width:1px;height:414px;background:#bcbcbc;"></div>
<div style="left:275px;top:65px;width:1px;height:390px;background:#f8f8f8;"></div>
<div style="left:783px;top:42px;width:1px;height:414px;background:#c8c8c8;"></div>
<div style="left:274px;top:455px;width:510px;height:1px;background:#c8c8c8;"></div>
<div style="left:275px;top:43px;width:508px;height:22px;background:#ffffff;"></div>
<div class="t" style="left:277.5px;top:47px;font-size:11.5px;color:#000;transform:scaleX(0.9);transform-origin:0 0;">Layer Generation</div>
<svg style="left:765px;top:49px" width="11" height="10" viewBox="0 0 11 10"><path d="M0.5 0.5L10 9.5M10 0.5L0.5 9.5" stroke="#000" stroke-width="1"/></svg>
<div style="left:280px;top:68px;width:377px;height:191px;background:#c6c5a7;"></div>
<div style="left:704px;top:82px;width:66px;height:19px;background:#0078d7;"></div>
<div style="left:706px;top:84px;width:62px;height:15px;background:#e1e1e1;"></div>
<div class="t" style="left:731px;top:87px;font-size:11px;color:#000;transform:scaleX(0.87);transform-origin:0 0;">OK</div>
<div style="left:704px;top:113px;width:66px;height:19px;background:#adadad;"></div>
<div style="left:705px;top:114px;width:64px;height:17px;background:#e1e1e1;"></div>
<div class="t" style="left:722px;top:118px;font-size:11px;color:#000;transform:scaleX(0.87);transform-origin:0 0;">Cancel</div>
<div class="t" style="left:696px;top:150px;font-size:11px;color:#000;transform:scaleX(0.85);transform-origin:0 0;">Num of Layers</div>
<div style="left:694px;top:168px;width:59px;height:21px;background:#7a7a7a;"></div>
<div style="left:736px;top:168px;width:17px;height:21px;background:#c4c4c4;"></div>
<div style="left:695px;top:169px;width:57px;height:19px;background:#ffffff;"></div>
<div style="left:737px;top:169px;width:15px;height:19px;background:#f0f0f0;"></div>
<div style="left:738px;top:170px;width:13px;height:8px;background:#e6e6e6;"></div>
<div style="left:738px;top:179px;width:13px;height:8px;background:#e6e6e6;"></div>
<svg style="left:740px;top:172px" width="9" height="14" viewBox="0 0 9 14"><path d="M1.5 4.5L4.5 1.5L7.5 4.5Z" fill="#606060"/><path d="M1.5 9.5L4.5 12.5L7.5 9.5Z" fill="#606060"/></svg>
<div class="t" style="left:697px;top:172px;font-size:11px;color:#000;transform:scaleX(0.87);transform-origin:0 0;">1</div>
<div style="left:280px;top:262px;width:493px;height:187px;background:#b4b8c0;"></div>
<div style="left:280px;top:262px;width:493px;height:186px;background:#9ea3ab;"></div>
<div style="left:281px;top:263px;width:491px;height:184px;background:#ffffff;"></div>
<div style="left:368px;top:264px;width:1px;height:21px;background:#e5e5e5;"></div>
<div style="left:422px;top:264px;width:1px;height:21px;background:#e5e5e5;"></div>
<div style="left:476px;top:264px;width:1px;height:21px;background:#e5e5e5;"></div>
<div style="left:530px;top:264px;width:1px;height:21px;background:#e5e5e5;"></div>
<div style="left:585px;top:264px;width:1px;height:21px;background:#e5e5e5;"></div>
<div style="left:640px;top:264px;width:1px;height:21px;background:#e5e5e5;"></div>
<div class="t" style="left:288px;top:269px;font-size:11px;color:#000;transform:scaleX(0.86);transform-origin:0 0;">Pattern</div>
<div class="t" style="left:374px;top:269px;font-size:11px;color:#000;transform:scaleX(0.86);transform-origin:0 0;">Cases/...</div>
<div class="t" style="left:171px;width:300px;text-align:right;top:269px;font-size:11px;color:#000;transform:scaleX(0.86);transform-origin:100% 0;">Area Eff...</div>
<div class="t" style="left:227px;width:300px;text-align:right;top:269px;font-size:11px;color:#000;transform:scaleX(0.86);transform-origin:100% 0;">Length</div>
<div class="t" style="left:280px;width:300px;text-align:right;top:269px;font-size:11px;color:#000;transform:scaleX(0.86);transform-origin:100% 0;">Width</div>
<div class="t" style="left:335px;width:300px;text-align:right;top:269px;font-size:11px;color:#000;transform:scaleX(0.86);transform-origin:100% 0;">Height</div>
<div style="left:281px;top:285px;width:474px;height:162px;overflow:hidden">
<div style="left:4px;top:1px;width:40px;height:15px;background:#0078d7"></div>
<div class="t" style="left:7px;top:3px;font-size:11px;color:#fff;transform:scaleX(0.87);transform-origin:0 0">BiBlock</div>
<div class="t" style="left:93px;top:3px;font-size:11px;color:#000;transform:scaleX(0.87);transform-origin:0 0">17</div>
<div class="t" style="left:-9px;width:200px;text-align:right;top:3px;font-size:11px;color:#000;transform:scaleX(0.87);transform-origin:100% 0">106.250</div>
<div class="t" style="left:46px;width:200px;text-align:right;top:3px;font-size:11px;color:#000;transform:scaleX(0.87);transform-origin:100% 0">50.000</div>
<div class="t" style="left:100px;width:200px;text-align:right;top:3px;font-size:11px;color:#000;transform:scaleX(0.87);transform-origin:100% 0">42.000</div>
<div class="t" style="left:154px;width:200px;text-align:right;top:3px;font-size:11px;color:#000;transform:scaleX(0.87);transform-origin:100% 0">45.000</div>
<div class="t" style="left:7px;top:19px;font-size:11px;color:#000;transform:scaleX(0.87);transform-origin:0 0">RowCol</div>
<div class="t" style="left:93px;top:19px;font-size:11px;color:#000;transform:scaleX(0.87);transform-origin:0 0">16</div>
<div class="t" style="left:-9px;width:200px;text-align:right;top:19px;font-size:11px;color:#000;transform:scaleX(0.87);transform-origin:100% 0">100.000</div>
<div class="t" style="left:46px;width:200px;text-align:right;top:19px;font-size:11px;color:#000;transform:scaleX(0.87);transform-origin:100% 0">48.000</div>
<div class="t" style="left:100px;width:200px;text-align:right;top:19px;font-size:11px;color:#000;transform:scaleX(0.87);transform-origin:100% 0">40.000</div>
<div class="t" style="left:154px;width:200px;text-align:right;top:19px;font-size:11px;color:#000;transform:scaleX(0.87);transform-origin:100% 0">45.000</div>
<div class="t" style="left:7px;top:34px;font-size:11px;color:#000;transform:scaleX(0.87);transform-origin:0 0">TriBlock</div>
<div class="t" style="left:93px;top:34px;font-size:11px;color:#000;transform:scaleX(0.87);transform-origin:0 0">16</div>
<div class="t" style="left:-9px;width:200px;text-align:right;top:34px;font-size:11px;color:#000;transform:scaleX(0.87);transform-origin:100% 0">100.000</div>
<div class="t" style="left:46px;width:200px;text-align:right;top:34px;font-size:11px;color:#000;transform:scaleX(0.87);transform-origin:100% 0">48.000</div>
<div class="t" style="left:100px;width:200px;text-align:right;top:34px;font-size:11px;color:#000;transform:scaleX(0.87);transform-origin:100% 0">42.000</div>
<div class="t" style="left:154px;width:200px;text-align:right;top:34px;font-size:11px;color:#000;transform:scaleX(0.87);transform-origin:100% 0">45.000</div>
<div class="t" style="left:7px;top:49px;font-size:11px;color:#000;transform:scaleX(0.87);transform-origin:0 0">TriBlock</div>
<div class="t" style="left:93px;top:49px;font-size:11px;color:#000;transform:scaleX(0.87);transform-origin:0 0">16</div>
<div class="t" style="left:-9px;width:200px;text-align:right;top:49px;font-size:11px;color:#000;transform:scaleX(0.87);transform-origin:100% 0">100.000</div>
<div class="t" style="left:46px;width:200px;text-align:right;top:49px;font-size:11px;color:#000;transform:scaleX(0.87);transform-origin:100% 0">48.000</div>
<div class="t" style="left:100px;width:200px;text-align:right;top:49px;font-size:11px;color:#000;transform:scaleX(0.87);transform-origin:100% 0">42.000</div>
<div class="t" style="left:154px;width:200px;text-align:right;top:49px;font-size:11px;color:#000;transform:scaleX(0.87);transform-origin:100% 0">45.000</div>
<div class="t" style="left:7px;top:65px;font-size:11px;color:#000;transform:scaleX(0.87);transform-origin:0 0">TriBlock</div>
<div class="t" style="left:93px;top:65px;font-size:11px;color:#000;transform:scaleX(0.87);transform-origin:0 0">16</div>
<div class="t" style="left:-9px;width:200px;text-align:right;top:65px;font-size:11px;color:#000;transform:scaleX(0.87);transform-origin:100% 0">100.000</div>
<div class="t" style="left:46px;width:200px;text-align:right;top:65px;font-size:11px;color:#000;transform:scaleX(0.87);transform-origin:100% 0">48.000</div>
<div class="t" style="left:100px;width:200px;text-align:right;top:65px;font-size:11px;color:#000;transform:scaleX(0.87);transform-origin:100% 0">42.000</div>
<div class="t" style="left:154px;width:200px;text-align:right;top:65px;font-size:11px;color:#000;transform:scaleX(0.87);transform-origin:100% 0">45.000</div>
<div class="t" style="left:7px;top:80px;font-size:11px;color:#000;transform:scaleX(0.87);transform-origin:0 0">TriBlock</div>
<div class="t" style="left:93px;top:80px;font-size:11px;color:#000;transform:scaleX(0.87);transform-origin:0 0">16</div>
<div class="t" style="left:-9px;width:200px;text-align:right;top:80px;font-size:11px;color:#000;transform:scaleX(0.87);transform-origin:100% 0">100.000</div>
<div class="t" style="left:46px;width:200px;text-align:right;top:80px;font-size:11px;color:#000;transform:scaleX(0.87);transform-origin:100% 0">48.000</div>
<div class="t" style="left:100px;width:200px;text-align:right;top:80px;font-size:11px;color:#000;transform:scaleX(0.87);transform-origin:100% 0">42.000</div>
<div class="t" style="left:154px;width:200px;text-align:right;top:80px;font-size:11px;color:#000;transform:scaleX(0.87);transform-origin:100% 0">45.000</div>
<div class="t" style="left:7px;top:95px;font-size:11px;color:#000;transform:scaleX(0.87);transform-origin:0 0">TriBlock</div>
<div class="t" style="left:93px;top:95px;font-size:11px;color:#000;transform:scaleX(0.87);transform-origin:0 0">16</div>
<div class="t" style="left:-9px;width:200px;text-align:right;top:95px;font-size:11px;color:#000;transform:scaleX(0.87);transform-origin:100% 0">100.000</div>
<div class="t" style="left:46px;width:200px;text-align:right;top:95px;font-size:11px;color:#000;transform:scaleX(0.87);transform-origin:100% 0">48.000</div>
<div class="t" style="left:100px;width:200px;text-align:right;top:95px;font-size:11px;color:#000;transform:scaleX(0.87);transform-origin:100% 0">42.000</div>
<div class="t" style="left:154px;width:200px;text-align:right;top:95px;font-size:11px;color:#000;transform:scaleX(0.87);transform-origin:100% 0">45.000</div>
<div class="t" style="left:7px;top:111px;font-size:11px;color:#000;transform:scaleX(0.87);transform-origin:0 0">TriBlock</div>
<div class="t" style="left:93px;top:111px;font-size:11px;color:#000;transform:scaleX(0.87);transform-origin:0 0">16</div>
<div class="t" style="left:-9px;width:200px;text-align:right;top:111px;font-size:11px;color:#000;transform:scaleX(0.87);transform-origin:100% 0">100.000</div>
<div class="t" style="left:46px;width:200px;text-align:right;top:111px;font-size:11px;color:#000;transform:scaleX(0.87);transform-origin:100% 0">48.000</div>
<div class="t" style="left:100px;width:200px;text-align:right;top:111px;font-size:11px;color:#000;transform:scaleX(0.87);transform-origin:100% 0">42.000</div>
<div class="t" style="left:154px;width:200px;text-align:right;top:111px;font-size:11px;color:#000;transform:scaleX(0.87);transform-origin:100% 0">45.000</div>
<div class="t" style="left:7px;top:126px;font-size:11px;color:#000;transform:scaleX(0.87);transform-origin:0 0">TriBlock</div>
<div class="t" style="left:93px;top:126px;font-size:11px;color:#000;transform:scaleX(0.87);transform-origin:0 0">16</div>
<div class="t" style="left:-9px;width:200px;text-align:right;top:126px;font-size:11px;color:#000;transform:scaleX(0.87);transform-origin:100% 0">100.000</div>
<div class="t" style="left:46px;width:200px;text-align:right;top:126px;font-size:11px;color:#000;transform:scaleX(0.87);transform-origin:100% 0">50.000</div>
<div class="t" style="left:100px;width:200px;text-align:right;top:126px;font-size:11px;color:#000;transform:scaleX(0.87);transform-origin:100% 0">42.000</div>
<div class="t" style="left:154px;width:200px;text-align:right;top:126px;font-size:11px;color:#000;transform:scaleX(0.87);transform-origin:100% 0">45.000</div>
<div class="t" style="left:7px;top:141px;font-size:11px;color:#000;transform:scaleX(0.87);transform-origin:0 0">TriBlock</div>
<div class="t" style="left:93px;top:141px;font-size:11px;color:#000;transform:scaleX(0.87);transform-origin:0 0">16</div>
<div class="t" style="left:-9px;width:200px;text-align:right;top:141px;font-size:11px;color:#000;transform:scaleX(0.87);transform-origin:100% 0">100.000</div>
<div class="t" style="left:46px;width:200px;text-align:right;top:141px;font-size:11px;color:#000;transform:scaleX(0.87);transform-origin:100% 0">50.000</div>
<div class="t" style="left:100px;width:200px;text-align:right;top:141px;font-size:11px;color:#000;transform:scaleX(0.87);transform-origin:100% 0">42.000</div>
<div class="t" style="left:154px;width:200px;text-align:right;top:141px;font-size:11px;color:#000;transform:scaleX(0.87);transform-origin:100% 0">45.000</div>
<div class="t" style="left:7px;top:157px;font-size:11px;color:#000;transform:scaleX(0.87);transform-origin:0 0">BiBlock</div>
<div class="t" style="left:93px;top:157px;font-size:11px;color:#000;transform:scaleX(0.87);transform-origin:0 0">15</div>
<div class="t" style="left:-9px;width:200px;text-align:right;top:157px;font-size:11px;color:#000;transform:scaleX(0.87);transform-origin:100% 0">92.750</div>
<div class="t" style="left:46px;width:200px;text-align:right;top:157px;font-size:11px;color:#000;transform:scaleX(0.87);transform-origin:100% 0">46.000</div>
<div class="t" style="left:100px;width:200px;text-align:right;top:157px;font-size:11px;color:#000;transform:scaleX(0.87);transform-origin:100% 0">40.000</div>
<div class="t" style="left:154px;width:200px;text-align:right;top:157px;font-size:11px;color:#000;transform:scaleX(0.87);transform-origin:100% 0">45.000</div>
</div>
<div style="left:756px;top:263px;width:16px;height:184px;background:#f0f0f0;"></div>
<div style="left:757px;top:279px;width:13px;height:49px;background:#cdcdcd;"></div>
<svg style="left:757px;top:267px" width="13" height="10" viewBox="0 0 13 10"><path d="M2.2 6.8L6.5 2.5L10.8 6.8" fill="none" stroke="#606060" stroke-width="2"/></svg>
<svg style="left:757px;top:434px" width="13" height="10" viewBox="0 0 13 10"><path d="M2.2 2.5L6.5 6.8L10.8 2.5" fill="none" stroke="#606060" stroke-width="2"/></svg>
<svg style="left:0;top:0" width="1024" height="481" viewBox="0 0 1024 481"><polygon points="408.0,212.0 463.3,240.0 463.3,249.0 408.0,222.5" fill="#ffff00"/><polygon points="463.3,241.7 531.5,210.0 531.5,215.5 518.0,222.0 518.0,219.5 507.0,225.0 507.0,227.5 482.0,239.5 482.0,237.0 472.0,241.5 472.0,244.5 463.3,249.0" fill="#ffff00"/><path d="M472 244.5V241.5M482 239.5V237M507 227.5V225M518 222V219.5M463.3 249L472 244.5M482 239.5L507 227.5M518 222L531 215.5" stroke="#000" stroke-width="0.8" fill="none"/><polygon points="409.0,136.5 463.3,166.6 463.3,242.0 409.0,213.0" fill="#80ffff" stroke="#000" stroke-width="1.2"/><polygon points="463.3,166.6 532.0,132.0 531.5,211.0 463.3,242.0" fill="#80ffff" stroke="#000" stroke-width="1.2"/><polygon points="409.0,136.5 474.3,104.2 532.0,132.0 463.3,166.6" fill="#80ffff" stroke="#000" stroke-width="1.2"/><line x1="422.5" y1="144.0" x2="422.5" y2="220.2" stroke="#000" stroke-width="1.15"/><line x1="436.7" y1="151.9" x2="436.7" y2="227.8" stroke="#000" stroke-width="1.15"/><line x1="447.0" y1="157.6" x2="447.0" y2="233.3" stroke="#000" stroke-width="1.15"/><line x1="409.0" y1="151.8" x2="463.3" y2="181.7" stroke="#000" stroke-width="1.15"/><line x1="409.0" y1="167.1" x2="463.3" y2="196.8" stroke="#000" stroke-width="1.15"/><line x1="409.0" y1="182.4" x2="463.3" y2="211.8" stroke="#000" stroke-width="1.15"/><line x1="409.0" y1="197.7" x2="463.3" y2="226.9" stroke="#000" stroke-width="1.15"/><line x1="477.5" y1="159.4" x2="477.4" y2="235.6" stroke="#000" stroke-width="1.15"/><line x1="491.7" y1="152.3" x2="491.5" y2="229.2" stroke="#000" stroke-width="1.15"/><line x1="505.0" y1="145.6" x2="504.7" y2="223.2" stroke="#000" stroke-width="1.15"/><line x1="519.0" y1="138.5" x2="518.6" y2="216.9" stroke="#000" stroke-width="1.15"/><line x1="463.3" y1="181.7" x2="532.0" y2="147.8" stroke="#000" stroke-width="1.15"/><line x1="463.3" y1="196.8" x2="532.0" y2="163.6" stroke="#000" stroke-width="1.15"/><line x1="463.3" y1="211.8" x2="532.0" y2="179.4" stroke="#000" stroke-width="1.15"/><line x1="463.3" y1="226.9" x2="532.0" y2="195.2" stroke="#000" stroke-width="1.15"/><line x1="422.6" y1="144.0" x2="488.7" y2="111.2" stroke="#000" stroke-width="1.15"/><line x1="436.1" y1="151.6" x2="503.1" y2="118.1" stroke="#000" stroke-width="1.15"/><line x1="449.7" y1="159.1" x2="517.6" y2="125.0" stroke="#000" stroke-width="1.15"/><line x1="425.3" y1="128.4" x2="480.5" y2="157.9" stroke="#000" stroke-width="1.15"/><line x1="441.6" y1="120.3" x2="497.6" y2="149.3" stroke="#000" stroke-width="1.15"/><line x1="458.0" y1="112.3" x2="514.8" y2="140.7" stroke="#000" stroke-width="1.15"/><line x1="474.3" y1="104.2" x2="532.0" y2="132.0" stroke="#000" stroke-width="1.15"/><polygon points="447.0,159.0 462.0,152.5 476.5,160.0 463.3,166.6" fill="#80ffff" stroke="#000" stroke-width="1.2"/><line x1="477" y1="160" x2="477" y2="235" stroke="#000" stroke-width="1.4"/><path d="M409.5 214.8L446.5 233.5M409.5 222.8L462 249.2" stroke="#000" stroke-width="1.6" stroke-dasharray="1.2 1" fill="none"/><path d="M419.5 138.2L427.5 134.2Q427.0 139.4 419.5 138.2Z" fill="#407878" stroke="#000" stroke-width="0.9"/><path d="M433.0 145.8L441.0 141.8Q440.5 146.9 433.0 145.8Z" fill="#407878" stroke="#000" stroke-width="0.9"/><path d="M446.6 153.3L454.6 149.3Q454.1 154.5 446.6 153.3Z" fill="#407878" stroke="#000" stroke-width="0.9"/><path d="M460.2 160.8L468.2 156.8Q467.7 162.0 460.2 160.8Z" fill="#407878" stroke="#000" stroke-width="0.9"/><path d="M435.8 130.2L443.8 126.2Q443.3 131.3 435.8 130.2Z" fill="#407878" stroke="#000" stroke-width="0.9"/><path d="M449.4 137.7L457.4 133.7Q456.9 138.9 449.4 137.7Z" fill="#407878" stroke="#000" stroke-width="0.9"/><path d="M462.9 145.2L470.9 141.2Q470.4 146.4 462.9 145.2Z" fill="#407878" stroke="#000" stroke-width="0.9"/><path d="M476.5 152.7L484.5 148.7Q484.0 153.9 476.5 152.7Z" fill="#407878" stroke="#000" stroke-width="0.9"/><path d="M452.1 122.1L460.1 118.1Q459.6 123.3 452.1 122.1Z" fill="#407878" stroke="#000" stroke-width="0.9"/><path d="M465.7 129.6L473.7 125.6Q473.2 130.8 465.7 129.6Z" fill="#407878" stroke="#000" stroke-width="0.9"/><path d="M479.2 137.1L487.2 133.1Q486.8 138.3 479.2 137.1Z" fill="#407878" stroke="#000" stroke-width="0.9"/><path d="M492.8 144.7L500.8 140.7Q500.3 145.8 492.8 144.7Z" fill="#407878" stroke="#000" stroke-width="0.9"/><path d="M468.4 114.0L476.4 110.0Q475.9 115.2 468.4 114.0Z" fill="#407878" stroke="#000" stroke-width="0.9"/><path d="M482.0 121.5L490.0 117.5Q489.5 122.7 482.0 121.5Z" fill="#407878" stroke="#000" stroke-width="0.9"/><path d="M495.6 129.1L503.6 125.1Q503.1 130.2 495.6 129.1Z" fill="#407878" stroke="#000" stroke-width="0.9"/><path d="M509.1 136.6L517.1 132.6Q516.6 137.8 509.1 136.6Z" fill="#407878" stroke="#000" stroke-width="0.9"/><g font-family="Liberation Sans" font-weight="bold" font-size="12" fill="#000"><text x="368.5" y="192">50 (in)</text><text x="398" y="249">42 (in)</text><text x="502" y="249.5">50 (in)</text></g></svg>
</body></html>
